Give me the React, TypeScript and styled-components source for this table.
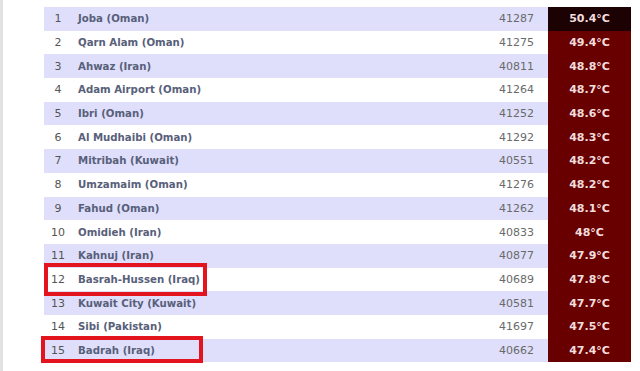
import styled, { createGlobalStyle } from "styled-components";

const Global = createGlobalStyle`
    html, body {
        margin: 0;
        padding: 0;
        background: #fff;
    }
    body {
        font-family: "DejaVu Sans", Verdana, sans-serif;
    }
`;

const Page = styled.div`
    width: 640px;
    height: 371px;
    box-sizing: border-box;
    border-left: 3px solid #e2e2e2;
    padding: 7px 0 0 41px;
    overflow: hidden;
`;

const Table = styled.div`
    position: relative;
    width: 587px;
    display: flex;
    flex-direction: column;
`;

const Row = styled.div<{ $odd: boolean }>`
    display: flex;
    align-items: center;
    height: 23.7px;
    background: ${(p) => (p.$odd ? "#dfdffb" : "#ffffff")};
    font-size: 11px;
`;

const Rank = styled.div`
    width: 28px;
    text-align: center;
    color: #555;
`;

const Name = styled.div`
    flex: 1;
    padding-left: 6px;
    font-size: 10.2px;
    font-weight: 700;
    color: #58607a;
`;

const Station = styled.div`
    width: 80px;
    text-align: right;
    padding-right: 14px;
    color: #6a6a6a;
`;

const Temp = styled.div<{ $hot: boolean }>`
    width: 83px;
    height: 100%;
    display: flex;
    align-items: center;
    justify-content: center;
    background: ${(p) => (p.$hot ? "#1c0202" : "#680000")};
    color: #f3dede;
    font-weight: 700;
`;

const Mark = styled.div<{ $top: number; $left: number; $w: number; $h: number }>`
    position: absolute;
    top: ${(p) => p.$top}px;
    left: ${(p) => p.$left}px;
    width: ${(p) => p.$w}px;
    height: ${(p) => p.$h}px;
    box-sizing: border-box;
    border: 4px solid #e3141e;
`;

const rows = [
    ["Joba (Oman)", "41287", "50.4°C"],
    ["Qarn Alam (Oman)", "41275", "49.4°C"],
    ["Ahwaz (Iran)", "40811", "48.8°C"],
    ["Adam Airport (Oman)", "41264", "48.7°C"],
    ["Ibri (Oman)", "41252", "48.6°C"],
    ["Al Mudhaibi (Oman)", "41292", "48.3°C"],
    ["Mitribah (Kuwait)", "40551", "48.2°C"],
    ["Umzamaim (Oman)", "41276", "48.2°C"],
    ["Fahud (Oman)", "41262", "48.1°C"],
    ["Omidieh (Iran)", "40833", "48°C"],
    ["Kahnuj (Iran)", "40877", "47.9°C"],
    ["Basrah-Hussen (Iraq)", "40689", "47.8°C"],
    ["Kuwait City (Kuwait)", "40581", "47.7°C"],
    ["Sibi (Pakistan)", "41697", "47.5°C"],
    ["Badrah (Iraq)", "40662", "47.4°C"],
];

export default function App() {
    return (
        <>
            <Global />
            <Page>
                <Table>
                    {rows.map(([name, station, temp], i) => (
                        <Row key={i} $odd={i % 2 === 0}>
                            <Rank>{i + 1}</Rank>
                            <Name>{name}</Name>
                            <Station>{station}</Station>
                            <Temp $hot={i === 0}>{temp}</Temp>
                        </Row>
                    ))}
                    <Mark $top={256} $left={0} $w={163} $h={33} />
                    <Mark $top={329} $left={-3} $w={162} $h={27} />
                </Table>
            </Page>
        </>
    );
}
